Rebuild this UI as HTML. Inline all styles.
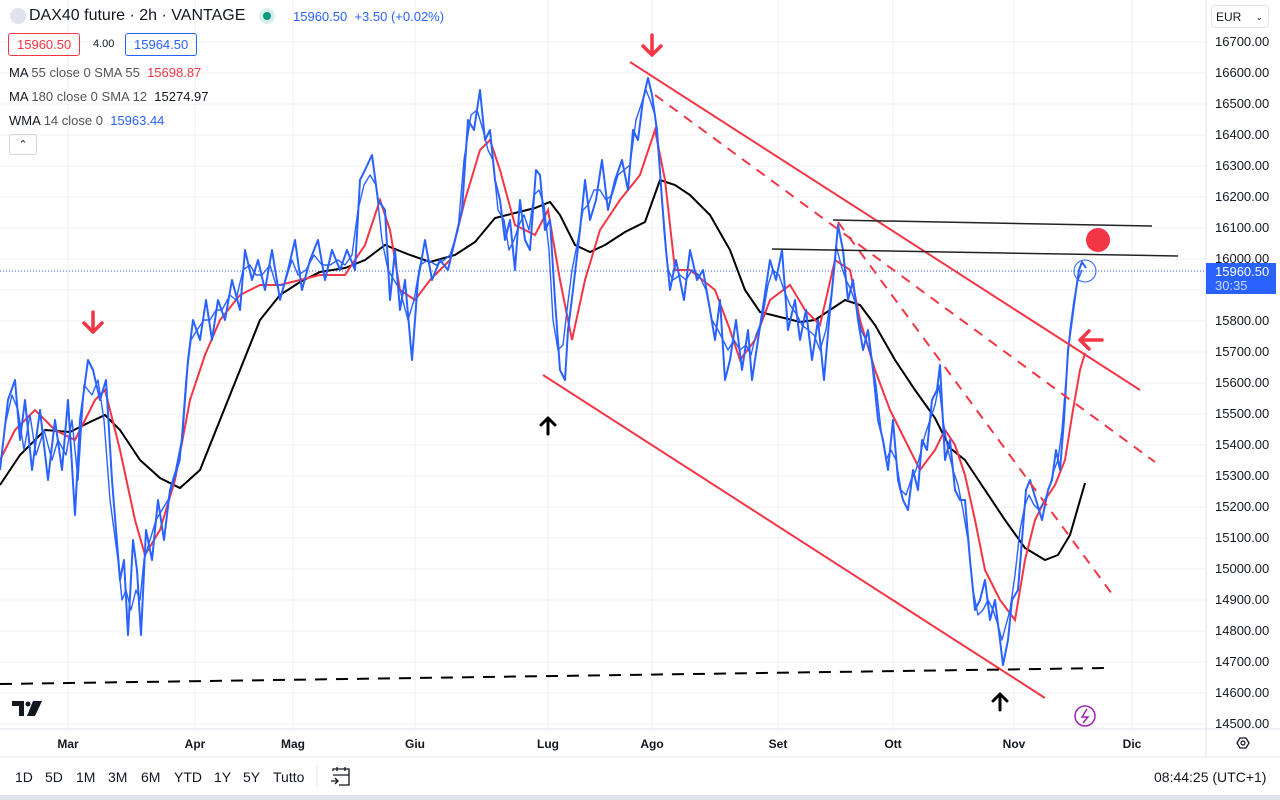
<!DOCTYPE html>
<html><head><meta charset="utf-8"><style>
body{margin:0;width:1280px;height:800px;background:#fff;font-family:"Liberation Sans",sans-serif;position:relative;overflow:hidden;color:#131722}
.ax{position:absolute;left:1215px;font-size:13px;color:#131722}
.t{position:absolute;font-size:13px}
.m{position:absolute;top:737px;font-size:12px;font-weight:bold;transform:translateX(-50%)}
.bb{position:absolute;top:769px;font-size:14px;color:#131722}
</style></head><body>
<svg width="1280" height="800" style="position:absolute;left:0;top:0">
<g stroke="#eef0f5" stroke-width="1">
<line x1="0" y1="42" x2="1206" y2="42"/><line x1="0" y1="73" x2="1206" y2="73"/><line x1="0" y1="104" x2="1206" y2="104"/><line x1="0" y1="135" x2="1206" y2="135"/><line x1="0" y1="166" x2="1206" y2="166"/><line x1="0" y1="197" x2="1206" y2="197"/><line x1="0" y1="228" x2="1206" y2="228"/><line x1="0" y1="259" x2="1206" y2="259"/><line x1="0" y1="290" x2="1206" y2="290"/><line x1="0" y1="321" x2="1206" y2="321"/><line x1="0" y1="352" x2="1206" y2="352"/><line x1="0" y1="383" x2="1206" y2="383"/><line x1="0" y1="414" x2="1206" y2="414"/><line x1="0" y1="445" x2="1206" y2="445"/><line x1="0" y1="476" x2="1206" y2="476"/><line x1="0" y1="507" x2="1206" y2="507"/><line x1="0" y1="538" x2="1206" y2="538"/><line x1="0" y1="569" x2="1206" y2="569"/><line x1="0" y1="600" x2="1206" y2="600"/><line x1="0" y1="631" x2="1206" y2="631"/><line x1="0" y1="662" x2="1206" y2="662"/><line x1="0" y1="693" x2="1206" y2="693"/><line x1="0" y1="724" x2="1206" y2="724"/>
<line x1="68" y1="0" x2="68" y2="729"/><line x1="195" y1="0" x2="195" y2="729"/><line x1="293" y1="0" x2="293" y2="729"/><line x1="415" y1="0" x2="415" y2="729"/><line x1="548" y1="0" x2="548" y2="729"/><line x1="652" y1="0" x2="652" y2="729"/><line x1="778" y1="0" x2="778" y2="729"/><line x1="893" y1="0" x2="893" y2="729"/><line x1="1014" y1="0" x2="1014" y2="729"/><line x1="1132" y1="0" x2="1132" y2="729"/>
</g>
<line x1="1206" y1="0" x2="1206" y2="757" stroke="#e0e3eb"/>
<line x1="0" y1="729" x2="1280" y2="729" stroke="#e0e3eb"/>
<line x1="0" y1="757" x2="1280" y2="757" stroke="#e0e3eb"/>
<rect x="0" y="795" width="1280" height="5" fill="#e0e3eb"/>
<line x1="0" y1="271" x2="1206" y2="271" stroke="#2962ff" stroke-dasharray="1,2" stroke-width="1"/>
<polyline fill="none" stroke="#000" stroke-width="2" points="0,485 20,455 45,430 70,432 90,422 105,415 120,430 140,460 160,478 180,488 200,470 220,420 240,370 260,320 280,295 300,282 320,272 345,268 365,260 385,245 410,255 430,262 455,255 475,242 495,218 515,213 535,208 550,202 560,215 575,245 590,252 605,245 625,232 645,222 660,180 675,185 690,195 710,215 730,250 745,290 760,312 780,317 800,322 815,320 830,310 845,300 860,305 875,325 895,360 915,390 935,418 950,448 965,460 985,490 1005,520 1025,548 1045,560 1058,555 1070,535 1085,483"/>
<polyline fill="none" stroke="#f23645" stroke-width="2" points="0,460 15,430 35,410 55,430 75,440 95,400 105,390 120,450 135,520 145,555 160,530 175,480 190,400 205,355 220,320 240,295 260,285 280,285 300,280 320,275 345,275 365,245 380,200 390,230 400,290 415,300 430,280 450,260 465,200 480,150 490,140 500,170 515,225 535,235 548,210 560,280 572,340 585,280 600,230 620,200 640,175 655,130 665,180 675,270 690,270 715,290 730,330 740,360 755,340 770,300 790,285 805,310 820,325 835,260 850,270 860,320 875,370 890,410 905,440 920,470 935,450 945,430 955,445 965,475 975,520 985,570 1000,600 1015,620 1025,560 1035,520 1045,500 1055,485 1065,460 1073,410 1080,370 1085,353"/>
<g fill="none" stroke="#2962ff" stroke-linejoin="round">
<polyline stroke-width="2" points="0,470 8,400 15,380 20,440 25,400 32,470 40,410 48,480 55,420 62,470 68,400 75,515 80,420 88,360 93,370 100,400 106,380 112,480 116,530 120,580 124,560 128,635 133,540 137,570 141,635 146,530 152,560 158,500 164,540 170,490 176,470 182,440 188,360 193,320 200,340 206,300 212,340 218,300 225,320 232,280 240,310 245,250 252,280 258,260 265,290 272,250 280,300 288,270 295,240 302,290 310,260 318,240 325,280 332,250 340,270 347,250 355,270 360,180 365,170 372,155 378,200 385,210 390,300 395,250 400,310 405,280 412,360 418,280 425,240 432,280 440,260 448,270 455,240 462,210 468,120 474,130 480,90 485,140 490,130 495,180 500,200 505,240 510,220 515,270 520,200 525,240 530,250 536,170 540,175 545,230 550,220 555,300 560,370 565,380 568,330 573,290 580,230 585,180 590,220 596,200 602,160 608,210 615,180 622,160 628,190 633,130 638,140 643,100 648,78 652,95 657,130 662,200 666,250 670,290 676,260 684,300 690,250 697,280 703,270 710,310 715,340 720,300 725,380 730,360 736,320 742,370 748,330 752,380 758,340 764,300 770,260 776,280 782,250 788,330 795,300 800,340 806,310 812,360 818,320 824,380 830,310 835,260 838,225 843,250 848,300 853,280 858,320 863,350 868,330 873,370 878,420 883,440 888,470 893,420 898,480 903,500 908,510 913,470 918,490 922,440 927,450 932,400 937,390 940,365 945,460 950,440 955,490 960,500 965,500 970,560 975,610 980,600 985,580 990,620 995,600 1000,640 1003,665 1008,640 1012,600 1018,590 1022,540 1026,490 1030,480 1036,500 1042,520 1048,490 1052,480 1056,450 1060,470 1064,420 1068,350 1072,320 1076,290 1079,270 1082,262 1086,268"/>
<polyline stroke-width="1.4" points="4,430 12,395 18,410 24,450 30,415 36,455 44,430 52,460 58,440 66,455 72,420 78,480 84,385 92,395 98,380 104,420 110,500 118,560 122,600 126,590 131,610 136,590 140,600 144,560 150,540 156,520 162,510 168,500 174,480 180,460 186,380 191,340 197,330 204,320 210,320 216,310 222,310 230,295 236,300 243,270 250,265 256,275 262,275 270,265 276,285 284,285 292,260 298,275 306,270 314,255 322,265 330,265 338,260 345,265 352,255 358,210 364,185 370,175 376,185 382,240 388,270 394,280 400,290 408,320 414,300 420,265 428,260 436,265 444,260 450,255 458,230 464,160 471,115 477,110 483,130 488,150 493,160 498,210 504,220 509,250 514,240 519,225 524,215 529,230 534,195 539,190 544,205 549,250 553,320 558,350 563,345 567,310 572,270 578,240 583,210 588,205 594,190 600,190 606,200 612,195 618,175 624,170 630,165 636,120 641,105 646,90 650,100 655,115 660,170 664,230 668,270 673,280 680,275 686,280 692,270 699,275 706,290 712,320 718,330 723,340 728,350 734,340 740,350 746,345 751,355 756,335 762,320 768,285 773,270 779,275 784,290 790,305 797,315 802,325 808,330 814,335 820,350 826,330 832,290 836,245 841,265 846,280 851,290 856,305 861,330 866,340 871,355 876,385 881,430 886,460 891,450 896,460 901,490 906,495 911,480 916,470 920,455 925,435 930,420 935,405 939,385 943,420 948,450 953,470 958,485 963,510 968,540 973,590 978,615 983,610 988,600 993,610 998,625 1002,640 1006,625 1010,610 1015,575 1020,530 1025,505 1029,495 1034,505 1039,510 1045,500 1050,485 1054,470 1058,460 1062,430 1066,380 1070,330 1074,300 1078,280 1082,270"/>
</g>
<circle cx="1085" cy="271" r="11" fill="none" stroke="#2962ff" stroke-width="1"/>
<line x1="630" y1="62" x2="1140" y2="390" stroke="#f23645" stroke-width="2"/>
<line x1="543" y1="375" x2="1045" y2="698" stroke="#f23645" stroke-width="2"/>
<line x1="655" y1="95" x2="1155" y2="462" stroke="#f23645" stroke-width="2" stroke-dasharray="10,8"/>
<line x1="838" y1="222" x2="1115" y2="598" stroke="#f23645" stroke-width="2" stroke-dasharray="10,8"/>
<line x1="833" y1="220" x2="1152" y2="226" stroke="#222" stroke-width="1.5"/>
<line x1="772" y1="249" x2="1178" y2="256" stroke="#222" stroke-width="1.5"/>
<line x1="0" y1="684" x2="1108" y2="668" stroke="#000" stroke-width="2" stroke-dasharray="12,9"/>
<circle cx="1098" cy="240" r="12" fill="#f23645"/>
<g stroke="#f23645" stroke-width="3.5" fill="none" stroke-linecap="round" stroke-linejoin="round">
<path d="M93 312 V332 M84 323 L93 332 L102 323"/>
<path d="M652 35 V55 M643 46 L652 55 L661 46"/>
<path d="M1080 340 H1102 M1089 331 L1080 340 L1089 349"/>
</g>
<g stroke="#000" stroke-width="3" fill="none" stroke-linecap="round" stroke-linejoin="round">
<path d="M548 434 V418 M541 425 L548 418 L555 425"/>
<path d="M1000 710 V694 M993 701 L1000 694 L1007 701"/>
</g>
<circle cx="1085" cy="716" r="10" fill="none" stroke="#9c27b0" stroke-width="1.5"/>
<path d="M1087 709 L1082 717 H1088 L1083 723" stroke="#9c27b0" stroke-width="1.5" fill="none"/>
<path d="M12 701 H24 V716 H19 V706 H12 Z" fill="#131722"/><circle cx="28" cy="704" r="2.5" fill="#131722"/><path d="M33 701 H42 L35 716 H27 Z" fill="#131722"/>
<path d="M1237 743 L1240 738 H1246 L1249 743 L1246 748 H1240 Z" fill="none" stroke="#131722" stroke-width="1.3"/><circle cx="1243" cy="743" r="2" fill="none" stroke="#131722" stroke-width="1.2"/>
<g stroke="#131722" stroke-width="1.3" fill="none"><path d="M333 771 V769 H349 V785 H339 M333 775 H349 M337 767 V771 M345 767 V771 M331 781 H338 M335 778 L338 781 L335 784"/></g>
<line x1="317" y1="765" x2="317" y2="787" stroke="#e0e3eb"/>
<circle cx="18" cy="16" r="8" fill="#e0e3eb"/>
<circle cx="267" cy="16" r="8" fill="#d7f0ea"/><circle cx="267" cy="16" r="4" fill="#089981"/>
</svg>
<div class="t" style="left:29px;top:7px;font-size:16px">DAX40 future · 2h · VANTAGE</div>
<div class="t" style="left:293px;top:9px;color:#2962ff">15960.50 &nbsp;+3.50 (+0.02%)</div>
<div class="t" style="left:8px;top:33px;border:1px solid #f23645;color:#f23645;border-radius:3px;padding:3px 8px;font-size:13px">15960.50</div>
<div class="t" style="left:93px;top:38px;font-size:11px">4.00</div>
<div class="t" style="left:125px;top:33px;border:1px solid #2962ff;color:#2962ff;border-radius:3px;padding:3px 8px;font-size:13px">15964.50</div>
<div class="t" style="left:9px;top:65px"><span>MA</span> <span style="color:#555">55 close 0 SMA 55</span> &nbsp;<span style="color:#f23645">15698.87</span></div>
<div class="t" style="left:9px;top:89px"><span>MA</span> <span style="color:#555">180 close 0 SMA 12</span> &nbsp;<span>15274.97</span></div>
<div class="t" style="left:9px;top:113px"><span>WMA</span> <span style="color:#555">14 close 0</span> &nbsp;<span style="color:#2962ff">15963.44</span></div>
<div class="t" style="left:9px;top:134px;width:26px;height:19px;border:1px solid #d1d4dc;border-radius:3px;text-align:center;font-size:11px;line-height:20px">&#8963;</div>
<div class="t" style="left:1211px;top:5px;width:58px;height:23px;border:1px solid #e0e3eb;border-radius:4px;font-size:12px;line-height:23px;padding-left:4px;box-sizing:border-box">EUR<span style="position:absolute;right:5px;font-size:9px">&#8964;</span></div>
<div class="ax" style="top:34px">16700.00</div><div class="ax" style="top:65px">16600.00</div><div class="ax" style="top:96px">16500.00</div><div class="ax" style="top:127px">16400.00</div><div class="ax" style="top:158px">16300.00</div><div class="ax" style="top:189px">16200.00</div><div class="ax" style="top:220px">16100.00</div><div class="ax" style="top:251px">16000.00</div><div class="ax" style="top:313px">15800.00</div><div class="ax" style="top:344px">15700.00</div><div class="ax" style="top:375px">15600.00</div><div class="ax" style="top:406px">15500.00</div><div class="ax" style="top:437px">15400.00</div><div class="ax" style="top:468px">15300.00</div><div class="ax" style="top:499px">15200.00</div><div class="ax" style="top:530px">15100.00</div><div class="ax" style="top:561px">15000.00</div><div class="ax" style="top:592px">14900.00</div><div class="ax" style="top:623px">14800.00</div><div class="ax" style="top:654px">14700.00</div><div class="ax" style="top:685px">14600.00</div><div class="ax" style="top:716px">14500.00</div>
<div style="position:absolute;left:1206px;top:263px;width:70px;height:31px;background:#2962ff;color:#fff;font-size:13px;line-height:14px;padding:2px 0 0 9px;box-sizing:border-box">15960.50<br><span style="color:#c9d6ff">30:35</span></div>
<div class="m" style="left:68px">Mar</div><div class="m" style="left:195px">Apr</div><div class="m" style="left:293px">Mag</div><div class="m" style="left:415px">Giu</div><div class="m" style="left:548px">Lug</div><div class="m" style="left:652px">Ago</div><div class="m" style="left:778px">Set</div><div class="m" style="left:893px">Ott</div><div class="m" style="left:1014px">Nov</div><div class="m" style="left:1132px">Dic</div>
<div class="bb" style="left:15px">1D</div><div class="bb" style="left:45px">5D</div><div class="bb" style="left:76px">1M</div><div class="bb" style="left:108px">3M</div><div class="bb" style="left:141px">6M</div><div class="bb" style="left:174px">YTD</div><div class="bb" style="left:214px">1Y</div><div class="bb" style="left:243px">5Y</div><div class="bb" style="left:273px">Tutto</div>
<div class="bb" style="left:1154px">08:44:25 (UTC+1)</div>
</body></html>
